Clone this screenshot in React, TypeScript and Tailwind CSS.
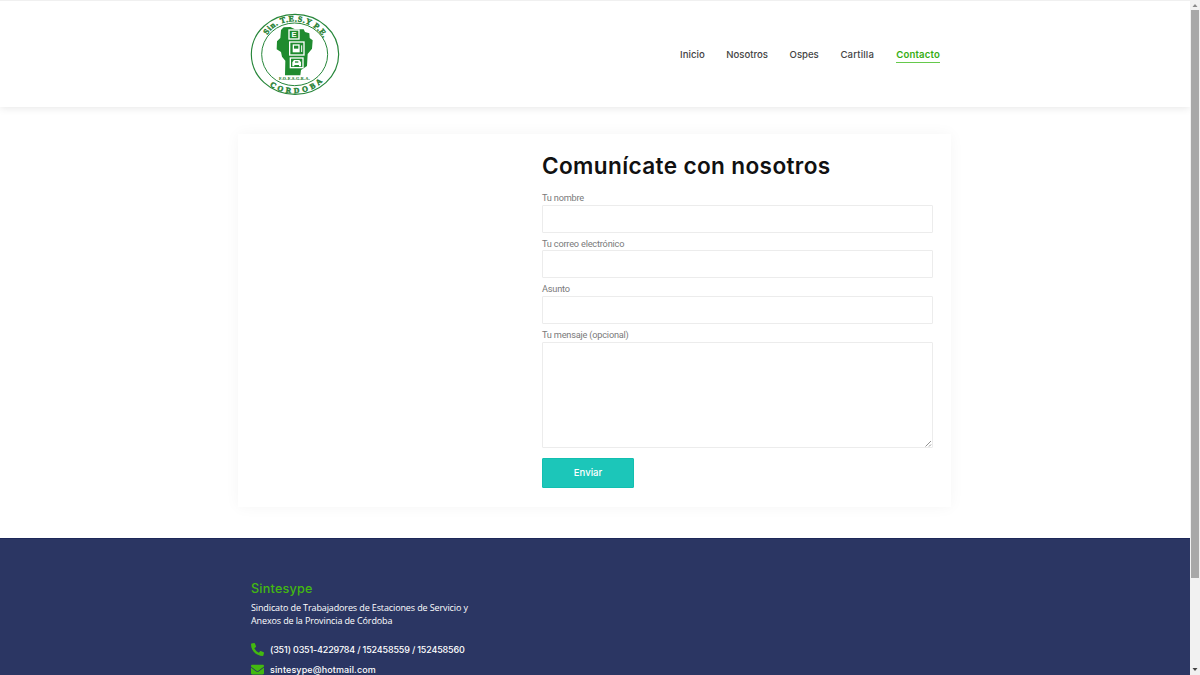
import { FaEnvelope, FaPhoneAlt } from "react-icons/fa";

function Logo() {
  return (
    <svg viewBox="0 0 300 276" className="h-[92px] w-[100px]" fill="none" role="img">
      <defs>
        <path id="logoTop" d="M67 81 C96 27 199 23 235 91" />
        <path id="logoBottom" d="M74 231 C105 265 194 266 233 220" />
      </defs>
      <ellipse cx="150" cy="139" rx="131" ry="120" stroke="#27863a" strokeWidth="3.5" />
      <ellipse cx="149" cy="139" rx="99" ry="94" stroke="#27863a" strokeWidth="3" />
      <path
        d="M108 66 L116 58 L136 57 L150 64 L176 64 L180 72 L193 76 L194 90 L203 97 L201 122 L188 138 L186 174 L168 186 L166 202 L120 202 L121 158 L111 146 L108 132 L95 124 L96 100 L106 90 Z"
        fill="#1f8b2f"
      />
      <g stroke="#fff" strokeWidth="4">
        <rect x="132" y="66" width="30" height="27" />
        <rect x="134" y="102" width="43" height="39" />
        <rect x="136" y="150" width="38" height="29" />
      </g>
      <text x="147" y="88" textAnchor="middle" fontSize="23" fontWeight="700" fill="#fff" fontFamily="Liberation Sans, sans-serif">E</text>
      <path d="M143 109h21v24h-21z" fill="#fff" />
      <path d="M147 113h13v9h-13z" fill="#1f8b2f" />
      <path d="M170 112v20" stroke="#fff" strokeWidth="3" />
      <path d="M142 175v-12l5-7h16l5 7v12h-6v-4h-14v4z" fill="#fff" />
      <path d="M150 160h10v4h-10z" fill="#1f8b2f" />
      <g fill="#1f7f32" stroke="#1f7f32" strokeWidth="1.3" fontFamily="Liberation Serif, serif" fontWeight="700">
        <text fontSize="24">
          <textPath href="#logoTop" textLength="200">Sin. T.E.S.Y P.E.</textPath>
        </text>
        <text fontSize="23">
          <textPath href="#logoBottom" textLength="174">CORDOBA</textPath>
        </text>
        <text x="102" y="217" fontSize="12" strokeWidth="0.4" textLength="92">F.O.E.S.G.R.A.</text>
      </g>
    </svg>
  );
}

const links = [
  { name: "Inicio", box: "w-[25px]", text: "tracking-[0.05px]" },
  { name: "Nosotros", box: "w-[42px]", text: "tracking-[-0.02px]" },
  { name: "Ospes", box: "w-[29.5px]", text: "tracking-[-0.02px]" },
  { name: "Cartilla", box: "w-[34.5px]", text: "tracking-[0.17px]" },
];

const label = "block h-[13px] text-[9.2px] leading-[13.5px] tracking-[-0.2px] text-[#7a7a7a]";
const field = "block w-full rounded-[1px] border border-[#ececec] bg-white outline-none";

export default function App() {
  return (
    <div className="flex h-[675px] w-[1200px] overflow-hidden bg-white font-['Inter',sans-serif]">
      <div className="flex w-[1190px] shrink-0 flex-col">
        <header className="flex h-[107px] shrink-0 items-start border-t border-[#f0f0f0] pt-[7px] pl-[245px] shadow-[0_1px_8px_rgba(0,0,0,0.10)]">
          <Logo />
          <nav className="mt-[38px] ml-[335px] flex gap-[21.3px] text-[9.6px] leading-[17px] font-medium text-[#444]">
            {links.map((l) => (
              <a key={l.name} className={`${l.box} ${l.text} whitespace-nowrap`}>
                {l.name}
              </a>
            ))}
            <a className="h-[17px] w-[44px] border-b border-[#65c94b] font-semibold tracking-[0.18px] whitespace-nowrap text-[#36ad12]">
              Contacto
            </a>
          </nav>
        </header>

        <main className="h-[431px] shrink-0 pt-[27px] pl-[238px]">
          <section className="h-[373px] w-[713px] bg-white pt-[17px] pr-[18px] pl-[304px] shadow-[0_0_14px_rgba(0,0,0,0.045)]">
            <h1 className="h-[40px] text-[22.6px] leading-[30px] font-semibold tracking-[0.36px] whitespace-nowrap text-[#111]">
              Comunícate con nosotros
            </h1>
            <form className="font-['Roboto',sans-serif]">
              <label className={label}>Tu nombre</label>
              <input className={`${field} mt-px mb-[4px] h-[28px]`} />
              <label className={label}>Tu correo electrónico</label>
              <input className={`${field} mb-[4px] h-[28px]`} />
              <label className={label}>Asunto</label>
              <input className={`${field} mt-px mb-[4px] h-[28px]`} />
              <label className={label}>Tu mensaje (opcional)</label>
              <div className={`${field} mt-px flex h-[106px] items-end justify-end`}>
                <svg viewBox="0 0 7 7" className="h-[7px] w-[7px]" stroke="#777" strokeWidth="0.8">
                  <path d="M0.5 6.5 6 1M4 6.5 6 4.5" />
                </svg>
              </div>
              <button
                type="button"
                className="mt-[10px] flex h-[30px] w-[92px] items-center justify-center rounded-[1px] border border-[#12bfb0] bg-[#1cc6b9] font-['Inter',sans-serif] text-[9.6px] leading-[14px] font-medium text-white"
              >
                Enviar
              </button>
            </form>
          </section>
        </main>

        <footer className="h-[137px] shrink-0 border-t border-[#1d2859] bg-[#2b3663] pt-[41px] pl-[251px] text-white">
          <h2 className="h-[21px] text-[12.6px] leading-[18px] font-medium tracking-[0.22px] text-[#43b910]">Sintesype</h2>
          <p className="font-['Open_Sans',sans-serif] text-[9px] leading-[13px] font-medium tracking-[-0.12px] whitespace-nowrap">
            Sindicato de Trabajadores de Estaciones de Servicio y
            <br />
            Anexos de la Provincia de Córdoba
          </p>
          <div className="mt-[12px] flex h-[20px] items-center gap-[6px] text-[9px] leading-[13px] font-medium">
            <FaPhoneAlt className="size-[13px] text-[#43b910]" />
            <span className="tracking-[-0.17px] whitespace-nowrap">(351) 0351-4229784 / 152458559 / 152458560</span>
          </div>
          <div className="flex h-[21px] items-center gap-[6px] text-[9px] leading-[13px] font-medium">
            <FaEnvelope className="size-[13px] text-[#43b910]" />
            <span className="tracking-[0.12px]">sintesype@hotmail.com</span>
          </div>
        </footer>
      </div>

      <aside className="flex w-[10px] shrink-0 flex-col items-center bg-[#f1f1f1]">
        <svg viewBox="0 0 10 10" className="h-[10px] w-[10px]" fill="#8a8a8a">
          <path d="M2.5 7 5 4 7.5 7z" />
        </svg>
        <div className="h-[568px] w-[8px] bg-[#a8a8a8]" />
        <svg viewBox="0 0 10 10" className="mt-auto h-[10px] w-[10px]" fill="#444">
          <path d="M2.5 3 5 6 7.5 3z" />
        </svg>
      </aside>
    </div>
  );
}
